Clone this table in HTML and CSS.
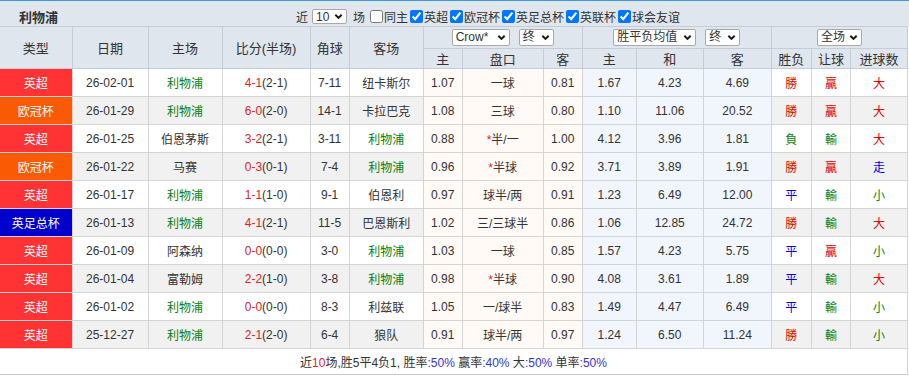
FILE: index.html
```html
<!DOCTYPE html>
<html>
<head>
<meta charset="utf-8">
<link rel="stylesheet" href="styles.css">
</head>
<body>
<div class="panel">
  <div class="titlebar">
    <span class="title">利物浦</span>
    <div class="filters">
      <span>近</span>
      <span class="dd dd-n"><select class="sel"><option>10</option></select><svg class="chev" viewBox="0 0 10 7"><polyline points="1.5,1.5 5,5 8.5,1.5"/></svg></span>
      <span>场</span>
      <label class="chk chk-first"><input type="checkbox">同主</label>
      <label class="chk"><input type="checkbox" checked>英超</label>
      <label class="chk"><input type="checkbox" checked>欧冠杯</label>
      <label class="chk"><input type="checkbox" checked>英足总杯</label>
      <label class="chk"><input type="checkbox" checked>英联杯</label>
      <label class="chk"><input type="checkbox" checked>球会友谊</label>
    </div>
  </div>
  <table class="grid">
    <colgroup>
      <col class="c72"><col class="c76"><col class="c74"><col class="c88"><col class="c39"><col class="c74">
      <col class="c39"><col class="c81"><col class="c39">
      <col class="c54"><col class="c67"><col class="c68">
      <col class="c40"><col class="c39"><col class="c57">
    </colgroup>
    <thead>
      <tr class="h1">
        <th rowspan="2" class="first">类型</th>
        <th rowspan="2">日期</th>
        <th rowspan="2">主场</th>
        <th rowspan="2">比分(半场)</th>
        <th rowspan="2">角球</th>
        <th rowspan="2">客场</th>
        <th colspan="3"><div class="selgroup">
          <span class="dd w58"><select class="sel"><option>Crow*</option></select><svg class="chev" viewBox="0 0 10 7"><polyline points="1.5,1.5 5,5 8.5,1.5"/></svg></span>
          <span class="dd w35"><select class="sel"><option>终</option></select><svg class="chev" viewBox="0 0 10 7"><polyline points="1.5,1.5 5,5 8.5,1.5"/></svg></span>
        </div></th>
        <th colspan="3"><div class="selgroup">
          <span class="dd w83"><select class="sel"><option>胜平负均值</option></select><svg class="chev" viewBox="0 0 10 7"><polyline points="1.5,1.5 5,5 8.5,1.5"/></svg></span>
          <span class="dd w35"><select class="sel"><option>终</option></select><svg class="chev" viewBox="0 0 10 7"><polyline points="1.5,1.5 5,5 8.5,1.5"/></svg></span>
        </div></th>
        <th colspan="3"><div class="selgroup">
          <span class="dd w45"><select class="sel"><option>全场</option></select><svg class="chev" viewBox="0 0 10 7"><polyline points="1.5,1.5 5,5 8.5,1.5"/></svg></span>
        </div></th>
      </tr>
      <tr class="h2">
        <th>主</th><th>盘口</th><th>客</th>
        <th>主</th><th>和</th><th>客</th>
        <th>胜负</th><th>让球</th><th>进球数</th>
      </tr>
    </thead>
    <tbody>
      <tr>
        <td class="type epl">英超</td><td>26-02-01</td><td class="team">利物浦</td>
        <td><span class="sc">4-1</span>(2-1)</td><td>7-11</td><td>纽卡斯尔</td>
        <td class="ah">1.07</td><td class="ah">一球</td><td class="ah">0.81</td>
        <td class="eu">1.67</td><td class="eu">4.23</td><td class="eu">4.69</td>
        <td class="r-red">勝</td><td class="r-red">贏</td><td class="r-red">大</td>
      </tr>
      <tr class="alt">
        <td class="type ucl">欧冠杯</td><td>26-01-29</td><td class="team">利物浦</td>
        <td><span class="sc">6-0</span>(2-0)</td><td>14-1</td><td>卡拉巴克</td>
        <td class="ah">1.08</td><td class="ah">三球</td><td class="ah">0.80</td>
        <td class="eu">1.10</td><td class="eu">11.06</td><td class="eu">20.52</td>
        <td class="r-red">勝</td><td class="r-red">贏</td><td class="r-red">大</td>
      </tr>
      <tr>
        <td class="type epl">英超</td><td>26-01-25</td><td>伯恩茅斯</td>
        <td><span class="sc">3-2</span>(2-1)</td><td>3-11</td><td class="team">利物浦</td>
        <td class="ah">0.88</td><td class="ah"><span class="star">*</span>半/一</td><td class="ah">1.00</td>
        <td class="eu">4.12</td><td class="eu">3.96</td><td class="eu">1.81</td>
        <td class="r-green">負</td><td class="r-green">輸</td><td class="r-red">大</td>
      </tr>
      <tr class="alt">
        <td class="type ucl">欧冠杯</td><td>26-01-22</td><td>马赛</td>
        <td><span class="sc">0-3</span>(0-1)</td><td>7-4</td><td class="team">利物浦</td>
        <td class="ah">0.96</td><td class="ah"><span class="star">*</span>半球</td><td class="ah">0.92</td>
        <td class="eu">3.71</td><td class="eu">3.89</td><td class="eu">1.91</td>
        <td class="r-red">勝</td><td class="r-red">贏</td><td class="r-blue">走</td>
      </tr>
      <tr>
        <td class="type epl">英超</td><td>26-01-17</td><td class="team">利物浦</td>
        <td><span class="sc">1-1</span>(1-0)</td><td>9-1</td><td>伯恩利</td>
        <td class="ah">0.97</td><td class="ah">球半/两</td><td class="ah">0.91</td>
        <td class="eu">1.23</td><td class="eu">6.49</td><td class="eu">12.00</td>
        <td class="r-blue">平</td><td class="r-green">輸</td><td class="r-green">小</td>
      </tr>
      <tr class="alt">
        <td class="type fac">英足总杯</td><td>26-01-13</td><td class="team">利物浦</td>
        <td><span class="sc">4-1</span>(2-1)</td><td>11-5</td><td>巴恩斯利</td>
        <td class="ah">1.02</td><td class="ah">三/三球半</td><td class="ah">0.86</td>
        <td class="eu">1.06</td><td class="eu">12.85</td><td class="eu">24.72</td>
        <td class="r-red">勝</td><td class="r-green">輸</td><td class="r-red">大</td>
      </tr>
      <tr>
        <td class="type epl">英超</td><td>26-01-09</td><td>阿森纳</td>
        <td><span class="sc">0-0</span>(0-0)</td><td>3-0</td><td class="team">利物浦</td>
        <td class="ah">1.03</td><td class="ah">一球</td><td class="ah">0.85</td>
        <td class="eu">1.57</td><td class="eu">4.23</td><td class="eu">5.75</td>
        <td class="r-blue">平</td><td class="r-red">贏</td><td class="r-green">小</td>
      </tr>
      <tr class="alt">
        <td class="type epl">英超</td><td>26-01-04</td><td>富勒姆</td>
        <td><span class="sc">2-2</span>(1-0)</td><td>3-8</td><td class="team">利物浦</td>
        <td class="ah">0.98</td><td class="ah"><span class="star">*</span>半球</td><td class="ah">0.90</td>
        <td class="eu">4.08</td><td class="eu">3.61</td><td class="eu">1.89</td>
        <td class="r-blue">平</td><td class="r-green">輸</td><td class="r-red">大</td>
      </tr>
      <tr>
        <td class="type epl">英超</td><td>26-01-02</td><td class="team">利物浦</td>
        <td><span class="sc">0-0</span>(0-0)</td><td>8-3</td><td>利兹联</td>
        <td class="ah">1.05</td><td class="ah">一/球半</td><td class="ah">0.83</td>
        <td class="eu">1.49</td><td class="eu">4.47</td><td class="eu">6.49</td>
        <td class="r-blue">平</td><td class="r-green">輸</td><td class="r-green">小</td>
      </tr>
      <tr class="alt">
        <td class="type epl">英超</td><td>25-12-27</td><td class="team">利物浦</td>
        <td><span class="sc">2-1</span>(2-0)</td><td>6-4</td><td>狼队</td>
        <td class="ah">0.91</td><td class="ah">球半/两</td><td class="ah">0.97</td>
        <td class="eu">1.24</td><td class="eu">6.50</td><td class="eu">11.24</td>
        <td class="r-red">勝</td><td class="r-green">輸</td><td class="r-green">小</td>
      </tr>
    </tbody>
    <tfoot>
      <tr>
        <td colspan="15" class="summary">近<span class="sc">10</span>场,胜5平4负1, 胜率<span class="pct">:50%</span> 赢率<span class="pct">:40%</span> 大<span class="pct">:50%</span> 单率<span class="pct">:50%</span></td>
      </tr>
    </tfoot>
  </table>
</div>
</body>
</html>
```

FILE: styles.css
```css
* { box-sizing: border-box; }

body {
  margin: 0;
  background: #ffffff;
  color: #333333;
  font-family: "Liberation Sans", Arial, "Noto Sans CJK SC", sans-serif;
  font-size: 12px;
}

.panel {
  width: 909px;
  border-top: 1px solid #3d9ddc;
}

.titlebar {
  display: flex;
  align-items: center;
  height: 25px;
  padding-top: 5px;
  background: #dfe6ee;
}

.title {
  width: 296px;
  padding-left: 19px;
  font-size: 13px;
  font-weight: bold;
  color: #333;
}

.filters {
  display: flex;
  align-items: center;
  font-size: 12px;
  color: #333;
}

/* custom dropdown */
.dd {
  position: relative;
  display: inline-block;
  height: 17px;
}

.dd .sel {
  -webkit-appearance: none;
  appearance: none;
  display: block;
  width: 100%;
  height: 100%;
  font-family: "Liberation Sans", Arial, "Noto Sans CJK SC", sans-serif;
  font-size: 12px;
  line-height: 15px;
  color: #333;
  background: #fff;
  border: 1px solid #a9a9a9;
  border-radius: 2px;
  padding: 0 0 0 3px;
  margin: 0;
  text-align: left;
}

.chev {
  position: absolute;
  right: 4px;
  top: 5px;
  width: 9px;
  height: 7px;
  fill: none;
  stroke: #1a1a1a;
  stroke-width: 2.2;
  pointer-events: none;
}

.dd-n { width: 35px; height: 15px; margin: 0 6px 0 4px; }
.dd-n .chev { top: 4px; }
.w58 { width: 58px; }
.w35 { width: 35px; }
.w83 { width: 83px; }
.w45 { width: 45px; }

.chk {
  display: inline-flex;
  align-items: center;
}

.chk input {
  width: 13px;
  height: 13px;
  margin: 0 1px 0 2px;
}

.chk-first input { margin-left: 5px; }

.grid {
  border-collapse: collapse;
  table-layout: fixed;
  width: 908px;
}

.c72 { width: 72px; }
.c76 { width: 76px; }
.c74 { width: 74px; }
.c88 { width: 88px; }
.c39 { width: 39px; }
.c81 { width: 81px; }
.c54 { width: 54px; }
.c67 { width: 67px; }
.c68 { width: 68px; }
.c40 { width: 40px; }
.c57 { width: 57px; }

.grid th {
  background: #dfe6ee;
  border: 1px solid #c4cdd7;
  font-weight: normal;
  font-size: 13px;
  color: #333;
  padding: 0;
  text-align: center;
}

.grid th.first { border-left: 0; }

.h1 th { height: 22px; }
.h2 th { height: 18px; }

.selgroup {
  display: flex;
  justify-content: center;
  align-items: center;
  gap: 9px;
}

.grid td {
  border: 1px solid #d4d4d4;
  height: 28px;
  padding: 0;
  text-align: center;
  white-space: nowrap;
  color: #333;
}

.grid tbody td:first-child { border-left: 0; }

.grid tr.alt td { background: #f1f1f1; }

.grid td.type { color: #fff; }
.grid td.epl, .grid tr.alt td.epl { background: #ff3333; }
.grid td.ucl, .grid tr.alt td.ucl { background: #fb5a05; }
.grid td.fac, .grid tr.alt td.fac { background: #0000cc; }

.grid td.ah, .grid tr.alt td.ah { background: #fffaf6; }
.grid td.eu, .grid tr.alt td.eu { background: #f0f6fc; }

.grid td.team { color: #0a7f0a; }
.sc { color: #e0202a; }
.star { color: #e0202a; }

.grid td.r-red { color: #e00000; }
.grid td.r-green { color: #0a7f0a; }
.grid td.r-blue { color: #0000dd; }

.grid td.summary {
  height: 26px;
  background: #fff;
  border-left: 0;
  border-bottom: 1px solid #c8c8c8;
  color: #333;
}

.pct { color: #3434d0; }
```
